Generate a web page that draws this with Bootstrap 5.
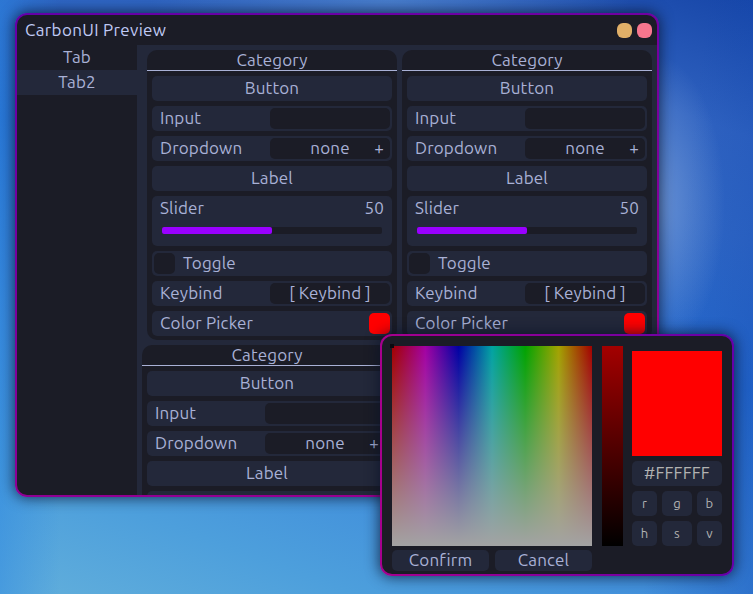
<!DOCTYPE html>
<html lang="en">
<head>
<meta charset="utf-8">
<title>CarbonUI Preview</title>
<link href="https://cdn.jsdelivr.net/npm/bootstrap@5.3.0/dist/css/bootstrap.min.css" rel="stylesheet">
<style>
:root{--ink:#1b1c26;--panel:#23283a;--txt:#a9b1d6}
html,body{height:594px;overflow:hidden}
body{font-family:Ubuntu,"Noto Sans",sans-serif;font-size:17px;line-height:25px;letter-spacing:.15px;color:var(--txt);
background:
linear-gradient(96deg,transparent 0,transparent 86.5%,rgba(20,75,180,.4) 100%),
linear-gradient(20deg,#62afdb 0%,#4d9fdc 15%,#3f8cdb 31%,#2468cc 55%,#2f66c4 72%,#2f62c0 84%,#1746a8 100%)}
.glow{position:absolute;inset:0;background:radial-gradient(ellipse 70px 150px at 655px 205px,rgba(130,165,220,.7),transparent),radial-gradient(ellipse 240px 70px at 390px 0,rgba(90,145,215,.6),transparent),linear-gradient(90deg,rgba(45,135,225,.5),transparent 60px)}
.win{position:absolute;border:2px solid transparent;border-radius:12px;box-shadow:0 0 14px 1px rgba(8,18,40,.75)}
.main-win{left:15px;top:13px;width:644px;height:484px;background:linear-gradient(var(--ink),var(--ink)) padding-box,linear-gradient(165deg,#6400a8,#7b009c 45%,#a0008c) border-box}
.picker{left:380px;top:334px;width:354px;height:242px;padding:10px 10px 0;background:linear-gradient(var(--ink),var(--ink)) padding-box,linear-gradient(90deg,#a6008e,#6400a8) border-box}
.clip{border-radius:10px;overflow:hidden}
.titlebar{height:30px;padding:0 5px 0 8px;color:#c0caf5;letter-spacing:.33px}
.titlebar .me-auto{line-height:23px;padding-bottom:2px}
.dot{width:15px;height:15px;border-radius:6px;margin-left:5px}
.dot-min{background:#e0af68}
.dot-close{background:#f7768e}
.win-body{min-height:0}
.tabs{width:120px}
.tabs>div{height:25px;line-height:24px}
.tabs .active{background:var(--panel)}
.content{background:var(--panel)}
.cats{padding:5px 5px 0 10px;gap:5px}
.cats.second{padding:5px 0 0 5px}
.cat{width:250px;background:var(--ink);border-radius:10px;padding-bottom:4px}
.cat-head{height:21px;line-height:20px;border-bottom:1px solid var(--txt)}
.rows{padding:5px 5px 0;gap:5px}
.item{height:25px;line-height:24px;background:var(--panel);border-radius:5px;padding:0 2px 0 8px}
.item>span{padding-bottom:1px}
.item.mid{padding:0}
.item.tog{padding-left:2px}
.field{width:120px;height:21px;line-height:20px;background:var(--ink);border-radius:5px}
.plus{position:absolute;right:6px;top:0}
.tick,.swatch{width:21px;height:21px;border-radius:5px;background:var(--ink)}
.swatch{background:red}
.slide{height:50px}
.slide-head{height:25px;padding-right:6px}
.track{height:7px;margin:6px 8px 0 2px;border-radius:2px;background:var(--ink)}
.bar-fill{height:7px;border-radius:2px;background:#90f}
.hue{position:relative;width:200px;height:200px;background:linear-gradient(rgba(163,163,163,0),#a3a3a3),linear-gradient(90deg,#a30000,#a300a3 16.67%,#0000a3 33.33%,#00a3a3 50%,#00a300 66.67%,#a3a300 83.33%,#a30000)}
.cursor{position:absolute;left:-2px;top:-2px;width:4px;height:4px;background:#0b0b10}
.val{width:21px;height:200px;margin:0 9px 0 10px;background:linear-gradient(#a30000,#000)}
.prev{width:90px;height:105px;background:red}
.pbtns{margin-top:4px}
.pbtn{height:21px;line-height:20px;width:97px;background:var(--panel);border-radius:5px}
.side{width:90px;padding-top:5px;color:#b2b2b2}
.ch{height:25px;background:var(--panel);border-radius:5px;font-size:13px}
.hex{margin:5px 0;font-size:17px;line-height:24px}
.chs{display:grid;grid-template-columns:25px 30px 25px;gap:5px}
</style>
</head>
<body>
<div class="glow"></div>
<div class="win main-win"><div class="clip d-flex flex-column h-100">
<div class="titlebar d-flex align-items-center flex-shrink-0"><span class="me-auto">CarbonUI Preview</span><span class="dot dot-min"></span><span class="dot dot-close"></span></div>
<div class="win-body d-flex flex-grow-1">
<div class="tabs text-center"><div>Tab</div><div class="active">Tab2</div></div>
<div class="content flex-grow-1 overflow-hidden" id="content"></div>
</div></div></div>
<div class="win picker">
<div class="d-flex">
<div><div class="hue"><div class="cursor"></div></div>
<div class="pbtns d-flex justify-content-between text-center"><div class="pbtn">Confirm</div><div class="pbtn">Cancel</div></div></div>
<div class="val"></div>
<div class="side text-center"><div class="prev"></div><div class="ch hex">#FFFFFF</div>
<div class="chs"><div class="ch">r</div><div class="ch">g</div><div class="ch">b</div><div class="ch">h</div><div class="ch">s</div><div class="ch">v</div></div></div>
</div></div>
<script src="https://cdn.jsdelivr.net/npm/bootstrap@5.3.0/dist/js/bootstrap.bundle.min.js"></script>
<script>
const line='item d-flex align-items-center justify-content-between';
const top4=`<div class="item mid text-center">Button</div>
<div class="${line}"><span>Input</span><div class="field"></div></div>
<div class="${line}"><span>Dropdown</span><div class="field text-center position-relative">none<span class="plus">+</span></div></div>
<div class="item mid text-center">Label</div>`;
const slider=v=>`<div class="item slide"><div class="slide-head d-flex justify-content-between"><span>Slider</span><span>${v}</span></div><div class="track"><div class="bar-fill" style="width:${v}%"></div></div></div>`;
const rest=`<div class="item tog d-flex align-items-center"><div class="tick"></div><span class="ms-2">Toggle</span></div>
<div class="${line}"><span>Keybind</span><div class="field text-center">[ Keybind ]</div></div>
<div class="${line}"><span>Color Picker</span><div class="swatch"></div></div>`;
const cat=body=>`<div class="cat flex-shrink-0"><div class="cat-head text-center">Category</div><div class="rows d-grid">${body}</div></div>`;
const full=cat(top4+slider(50)+rest);
document.getElementById('content').innerHTML=`<div class="cats d-flex">${full}${full}</div><div class="cats second d-flex">${cat(top4+'<div class="item slide"></div>')}</div>`;
</script>
</body>
</html>
